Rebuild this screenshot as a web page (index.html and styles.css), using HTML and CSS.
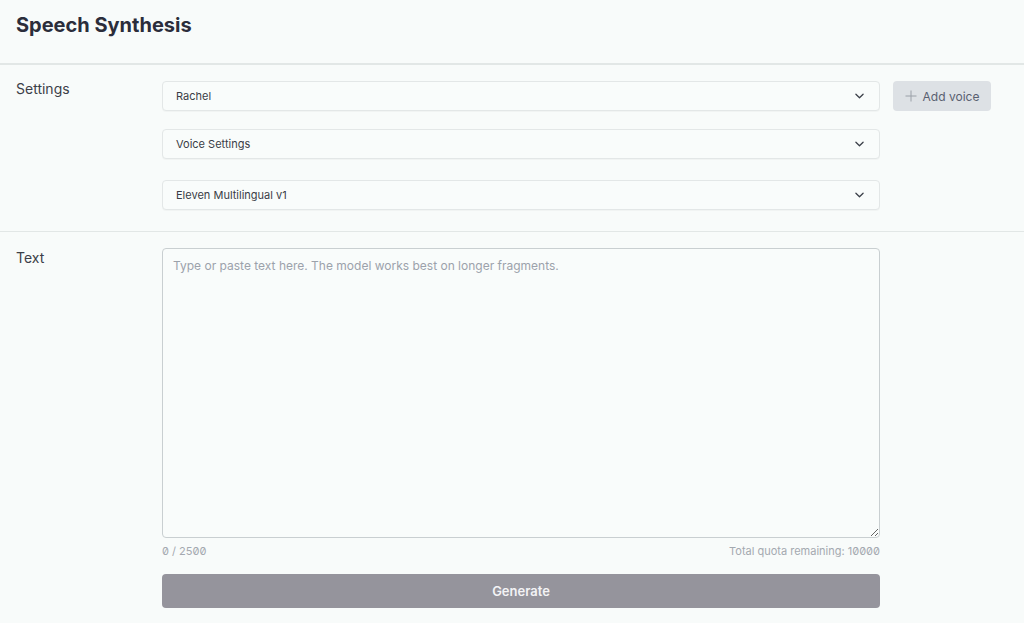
FILE: index.html
```html
<!DOCTYPE html>
<html>
<head>
<meta charset="utf-8">
<link rel="stylesheet" href="styles.css">
</head>
<body>
<div class="page">
  <header class="header"><h1>Speech Synthesis</h1></header>
  <section class="row settings">
    <div class="label">Settings</div>
    <div class="fields">
      <div class="line">
        <div class="select"><span>Rachel</span><svg class="chev" viewBox="0 0 10 6"><path d="M1 1l4 4 4-4" fill="none" stroke="#3a3f48" stroke-width="1.4" stroke-linecap="round" stroke-linejoin="round"/></svg></div>
        <button class="add"><svg class="plus" viewBox="0 0 12 12"><path d="M6 0.5v11M0.5 6h11" stroke="#9aa0a8" stroke-width="1"/></svg>Add voice</button>
      </div>
      <div class="select vs"><span>Voice Settings</span><svg class="chev" viewBox="0 0 10 6"><path d="M1 1l4 4 4-4" fill="none" stroke="#3a3f48" stroke-width="1.4" stroke-linecap="round" stroke-linejoin="round"/></svg></div>
      <div class="select model"><span>Eleven Multilingual v1</span><svg class="chev" viewBox="0 0 10 6"><path d="M1 1l4 4 4-4" fill="none" stroke="#3a3f48" stroke-width="1.4" stroke-linecap="round" stroke-linejoin="round"/></svg></div>
    </div>
  </section>
  <section class="row text">
    <div class="label">Text</div>
    <div class="fields textcol">
      <textarea class="area" placeholder="Type or paste text here. The model works best on longer fragments."></textarea>
      <div class="meta"><span>0 / 2500</span><span>Total quota remaining: 10000</span></div>
      <button class="generate">Generate</button>
    </div>
  </section>
</div>
</body>
</html>
```
FILE: styles.css
```css
html, body { margin: 0; padding: 0; background: #f8fbfa; }
body { font-family: Inter, "Noto Sans", sans-serif; color: #2d2f3a; }
.page { width: 1024px; }
.header { height: 63px; border-bottom: 2px solid #e2e7e6; box-sizing: content-box; }
.header h1 { margin: 0; padding: 14px 0 0 16px; font-size: 20px; font-weight: 700; color: #2b2d3b; letter-spacing: 0; line-height: 22px; }
.row { display: flex; padding-left: 16px; }
.settings { padding-top: 16px; padding-bottom: 21px; border-bottom: 1px solid #e2e7e6; }
.label { width: 146px; font-size: 14px; color: #3c3f48; line-height: 16px; padding-top: 0; }
.text .label { padding-top: 2px; }
.fields { display: flex; flex-direction: column; }
.line { display: flex; align-items: center; gap: 13px; }
.select { width: 718px; height: 30px; box-sizing: border-box; border: 1px solid #e3e7e7; border-radius: 4px; background: #f9fcfb; display: flex; align-items: center; justify-content: space-between; padding: 0 15px 0 13px; font-size: 11px; color: #3a3d46; box-shadow: 0 1px 1px rgba(0,0,0,0.03); }
.vs { margin-top: 18px; }
.model { margin-top: 21px; }
.chev { width: 9px; height: 6px; }
.add { height: 30px; width: 98px; border: none; border-radius: 4px; background: #dde1e5; color: #596070; font-family: inherit; font-size: 12px; display: flex; align-items: center; justify-content: center; gap: 6px; padding: 0; }
.plus { width: 12px; height: 12px; }
.text { padding-top: 16px; }
.textcol { width: 718px; }
.area { width: 718px; height: 290px; box-sizing: border-box; border: 1px solid #c9cfd1; border-radius: 4px; background: #f9fcfb; font-family: inherit; font-size: 12px; padding: 9px 10px; margin: 0; display: block; resize: vertical; }
.area::placeholder { color: #9ca2ab; }
.meta { display: flex; justify-content: space-between; font-size: 11px; color: #a4a9b0; margin-top: 7px; line-height: 12px; font-feature-settings: "zero" 1; }
.generate { margin-top: 17px; height: 34px; width: 718px; border: none; border-radius: 4px; background: #95949c; color: #f3f3f5; font-family: inherit; font-size: 13px; font-weight: 600; }
```
